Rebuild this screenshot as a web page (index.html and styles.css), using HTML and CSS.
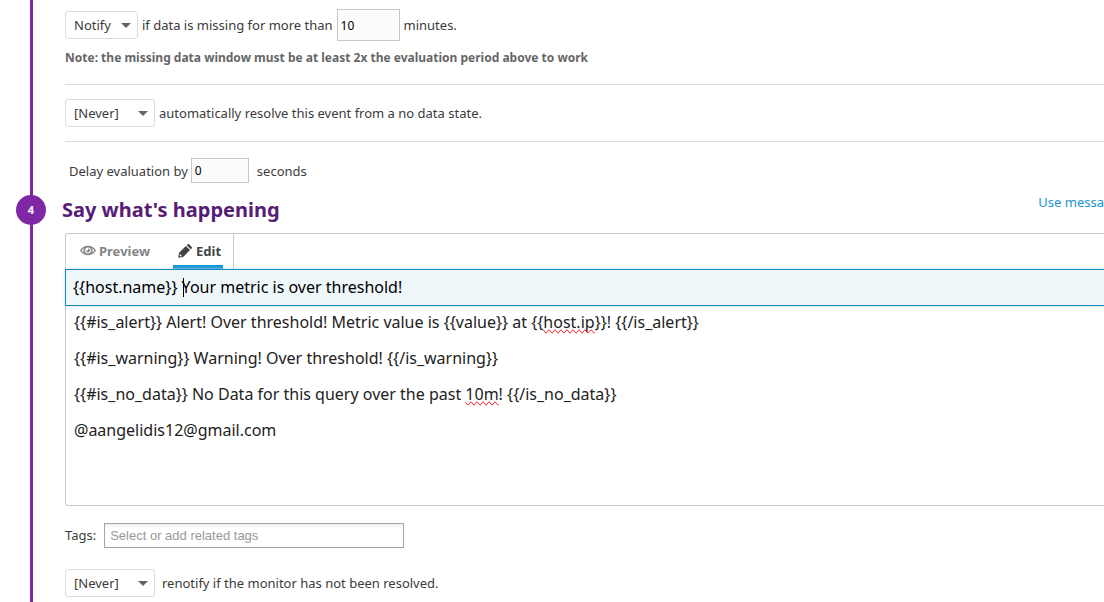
FILE: index.html
```html
<!DOCTYPE html>
<html lang="en">
<head>
<meta charset="utf-8">
<title>Edit monitor</title>
<link rel="stylesheet" href="styles.css">
</head>
<body>
<main class="monitor">
  <section class="conditions">
    <div class="row row-missing">
      <span class="picker"><select class="select" id="notify" aria-label="Missing data action"><option>Notify</option></select><svg class="caret" viewBox="0 0 10 5" aria-hidden="true"><path d="M0 0h10L5 5z"/></svg></span>
      <label for="window">if data is missing for more than</label>
      <input class="number number-tall" id="window" type="text" value="10">
      <span>minutes.</span>
    </div>
    <p class="note">Note: the missing data window must be at least 2x the evaluation period above to work</p>
    <div class="row row-resolve">
      <span class="picker picker-wide"><select class="select" id="resolve"><option>[Never]</option></select><svg class="caret" viewBox="0 0 10 5" aria-hidden="true"><path d="M0 0h10L5 5z"/></svg></span>
      <label for="resolve">automatically resolve this event from a no data state.</label>
    </div>
    <div class="row row-delay">
      <label for="delay">Delay evaluation by</label>
      <input class="number" id="delay" type="text" value="0">
      <span class="unit">seconds</span>
    </div>
  </section>

  <section class="message">
    <header class="step-header">
      <span class="step-badge">4</span>
      <h2 class="step-title">Say what's happening</h2>
      <a class="help-link" href="#variables">Use messa</a>
    </header>
    <div class="editor">
      <div class="tabs" role="tablist">
        <button class="tab" type="button" role="tab" aria-selected="false">
          <svg class="icon icon-eye" viewBox="0 0 16 12" aria-hidden="true"><path fill-rule="evenodd" d="M8 .8C4.500.8 1.700 2.700 0 5.500c1.700 2.800 4.500 4.700 8 4.700s6.300-1.900 8-4.700C14.300 2.700 11.500.8 8 .8zM4.700 2.700a4 4 0 0 0 0 5.600C3.400 7.700 2.400 6.700 1.600 5.500 2.400 4.300 3.400 3.300 4.700 2.700zM11.300 2.700a4 4 0 0 1 0 5.600c1.300-.6 2.300-1.600 3.100-2.800C13.600 4.300 12.600 3.300 11.300 2.700zM8 2.600a2.900 2.900 0 1 1 0 5.800a2.900 2.900 0 0 1 0-5.800z"/><path d="M8 3.600a1.900 1.900 0 1 1-1.900 1.900L8 5.500z"/></svg>
          Preview
        </button>
        <button class="tab tab-active" type="button" role="tab" aria-selected="true">
          <svg class="icon icon-pencil" viewBox="0 0 14 14" aria-hidden="true"><path fill-rule="evenodd" d="M.2 13.800l.9-5L7.900 2l4.100 4.100-6.800 6.800zM1.600 11.200l1.200 1.200.9-.2v-.9h-.9v-1h-1zM8.700 1.200l.9-.9q.8-.6 1.500 0l2.600 2.600q.6.700 0 1.500l-.9.900z"/></svg>
          Edit
        </button>
      </div>
      <div class="subject">
        <input class="subject-input" type="text" aria-label="Monitor title" value="{{host.name}} Your metric is over threshold!">
        <span class="text-cursor" aria-hidden="true"></span>
      </div>
      <div class="body-text" role="textbox" aria-multiline="true" aria-label="Message" contenteditable="true" spellcheck="false">
        <p>{{#is_alert}} Alert! Over threshold! Metric value is {{value}} at {{<span class="misspelt">host.ip</span>}}! {{/is_alert}}</p>
        <p>{{#is_warning}} Warning! Over threshold! {{/is_warning}}</p>
        <p>{{#is_no_data}} No Data for this query over the past <span class="misspelt">10m</span>! {{/is_no_data}}</p>
        <p>@aangelidis12@gmail.com</p>
      </div>
    </div>
    <div class="row row-tags">
      <label for="tags">Tags:</label>
      <input class="tags-input" id="tags" type="text" placeholder="Select or add related tags">
    </div>
    <div class="row row-renotify">
      <span class="picker picker-wide"><select class="select" id="renotify"><option>[Never]</option></select><svg class="caret" viewBox="0 0 10 5" aria-hidden="true"><path d="M0 0h10L5 5z"/></svg></span>
      <label for="renotify">renotify if the monitor has not been resolved.</label>
    </div>
  </section>
</main>
</body>
</html>
```
FILE: styles.css
```css
* {
  box-sizing: border-box;
}

body {
  margin: 0;
  background: #fff;
  color: #3b3b3b;
  font: 13px/20px "Noto Sans", sans-serif;
}

button,
input,
select {
  font: inherit;
  color: inherit;
}

.monitor {
  min-height: 100vh;
  margin: 0 0 0 30px;
  padding: 9px 0 5px 32px;
  border-left: 3px solid #7f27a5;
}

.row {
  display: flex;
  align-items: center;
  gap: 4px;
}

.picker {
  position: relative;
  display: inline-flex;
  width: 73px;
  height: 28px;
}

.picker-wide {
  width: 90px;
}

.select {
  appearance: none;
  width: 100%;
  padding: 0 24px 0 8px;
  border: 1px solid #dcdcdc;
  border-radius: 3px;
  background: #fff;
}

.caret {
  position: absolute;
  top: 12px;
  right: 7px;
  width: 10px;
  height: 5px;
  fill: #636363;
  pointer-events: none;
}

.number {
  width: 58px;
  height: 25px;
  padding: 0 3px;
  border: 1px solid #c8c8c8;
  background: #fcfcfc;
  color: #000;
  font-size: 12px;
}

.number-tall {
  width: 63px;
  height: 32px;
}

.note {
  margin: 7px 0 0;
  color: #666;
  font-size: 12px;
  font-weight: 700;
}

.row-resolve {
  margin-top: 16px;
  padding: 14px 0;
  border-top: 1px solid #dcdcdc;
  border-bottom: 1px solid #dcdcdc;
}

.row-delay {
  gap: 3px;
  padding: 16px 0 12px 4px;
}

.unit {
  margin-left: 5px;
}

.step-header {
  position: relative;
  display: flex;
  align-items: flex-start;
  justify-content: space-between;
  height: 38px;
  margin-left: -3px;
}

.step-badge {
  position: absolute;
  top: 0;
  left: -46px;
  width: 30px;
  height: 30px;
  border-radius: 50%;
  background: #7f27a5;
  color: #fff;
  font-size: 11px;
  font-weight: 700;
  line-height: 30px;
  text-align: center;
}

.step-title {
  margin: 0;
  color: #571c75;
  font-size: 20px;
  line-height: 30px;
}

.help-link {
  margin-top: -3px;
  color: #1a94d0;
  text-decoration: none;
}

.editor {
  border: 1px solid #c8c8c8;
  border-right: 0;
  border-radius: 3px 0 0 3px;
}

.tabs {
  display: flex;
  gap: 22px;
  width: 168px;
  height: 35px;
  padding-left: 14px;
  border-right: 1px solid #c8c8c8;
}

.tab {
  display: flex;
  align-items: center;
  gap: 3px;
  padding: 3px 0 0;
  border: 0;
  border-bottom: 4px solid transparent;
  background: none;
  color: #858585;
  font-weight: 700;
}

.tab-active {
  gap: 4px;
  margin-left: 1px;
  padding-left: 5px;
  padding-right: 2px;
  border-bottom-color: #1593d2;
  color: #444;
}

.icon {
  fill: currentColor;
}

.icon-eye {
  width: 16px;
  height: 12px;
}

.icon-pencil {
  width: 14px;
  height: 14px;
}

.subject {
  position: relative;
  margin-left: -1px;
}

.subject-input {
  display: block;
  width: 100%;
  height: 37px;
  padding: 0 7px 2px;
  border: 1px solid #1787c0;
  border-right: 0;
  background: #eff7fb;
  box-shadow: 0 0 3px #b9dff2;
  color: #000;
  font-size: 16px;
}

.text-cursor {
  position: absolute;
  top: 9px;
  left: 118px;
  width: 1px;
  height: 19px;
  background: #000;
}

.body-text {
  min-height: 199px;
  padding: 4px 8px;
  color: #222;
  font-size: 16px;
  line-height: 24px;
  outline: none;
}

.body-text p {
  margin: 0 0 12px;
}

.misspelt {
  text-decoration-line: spelling-error;
}

.row-tags {
  gap: 8px;
  margin-top: 17px;
}

.row-tags label {
  padding-bottom: 2px;
}

.tags-input {
  width: 300px;
  height: 25px;
  padding: 0 5px;
  border: 1px solid #a5a5a5;
  background: linear-gradient(#eee, #fff 4px);
  font-family: "Liberation Sans", sans-serif;
}

.tags-input::placeholder {
  color: #999;
}

.row-renotify {
  gap: 7px;
  margin-top: 21px;
}
```
